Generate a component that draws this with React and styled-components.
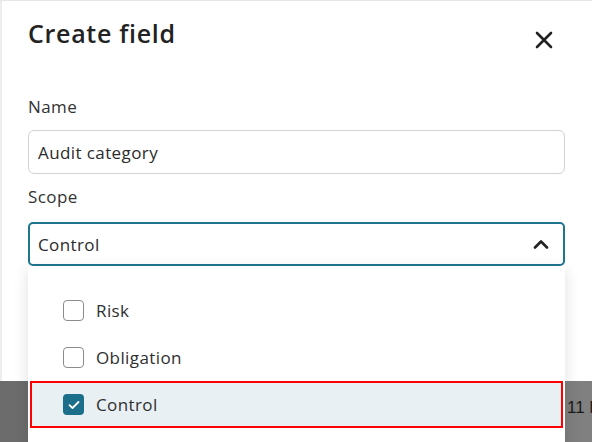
import React, { useState } from "react";
import styled, { createGlobalStyle } from "styled-components";

const GlobalStyle = createGlobalStyle`
  html, body {
    margin: 0;
    padding: 0;
  }
  body {
    font-family: "Open Sans", "Liberation Sans", sans-serif;
    color: #2b2b2b;
  }
`;

const Page = styled.div`
  position: relative;
  width: 592px;
  height: 442px;
  overflow: hidden;
  background: #757575;
  display: flex;
  flex-direction: column;
`;

const Modal = styled.div`
  background: #fff;
  border-top: 1px solid #e6e6e6;
  border-left: 2px solid #ededed;
  height: 381px;
  flex-shrink: 0;
  box-sizing: border-box;
  padding: 15px 27px 0 26px;
  display: flex;
  flex-direction: column;
`;

const Header = styled.div`
  display: flex;
  align-items: center;
  justify-content: space-between;
  height: 34px;
  margin-bottom: 45px;
`;

const Title = styled.h2`
  margin: 0;
  font-size: 25px;
  font-weight: 600;
  letter-spacing: 0.7px;
  color: #222;
`;

const CloseButton = styled.button`
  border: 0;
  background: none;
  padding: 0;
  margin: 14px 12px 0 0;
  display: flex;
  cursor: pointer;
`;

const Label = styled.div`
  font-size: 17px;
  letter-spacing: 0.4px;
  color: #333;
  line-height: 24px;
  margin-bottom: ${(p) => p.gap}px;
`;

const TextInput = styled.div`
  height: 44px;
  box-sizing: border-box;
  border: 1px solid #d3d3d3;
  border-radius: 6px;
  display: flex;
  align-items: center;
  padding: 0 9px;
  font-size: 17px;
  letter-spacing: 0.4px;
  color: #2b2b2b;
  margin-bottom: 11px;
`;

const SelectWrap = styled.div`
  position: relative;
`;

const SelectBox = styled.div`
  height: 44px;
  box-sizing: border-box;
  border: 2px solid #1f7590;
  border-radius: 5px;
  display: flex;
  align-items: center;
  justify-content: space-between;
  padding: 0 14px 0 8px;
  font-size: 17px;
  letter-spacing: 0.4px;
  color: #2b2b2b;
`;

const Menu = styled.div`
  position: absolute;
  top: 100%;
  left: 0;
  right: 0;
  height: 200px;
  background: #fff;
  box-shadow: 0 4px 14px rgba(0, 0, 0, 0.13);
  padding-top: 21px;
  box-sizing: border-box;
  z-index: 2;
`;

const Option = styled.div`
  height: 47px;
  box-sizing: border-box;
  margin: 0 2px;
  display: flex;
  align-items: center;
  gap: 12px;
  padding-left: 31px;
  font-size: 17px;
  letter-spacing: 0.4px;
  color: #2f2f2f;
  background: ${(p) => (p.selected ? "#e9f0f3" : "transparent")};
  border: 2px solid ${(p) => (p.selected ? "#ff0000" : "transparent")};
`;

const Check = styled.span`
  width: 21px;
  height: 21px;
  box-sizing: border-box;
  border-radius: 4px;
  border: ${(p) => (p.checked ? "none" : "1.5px solid #8c8c8c")};
  background: ${(p) => (p.checked ? "#1c6f8b" : "#fff")};
  display: flex;
  align-items: center;
  justify-content: center;
`;

const Backdrop = styled.div`
  flex: 1;
  display: flex;
  align-items: center;
  background: linear-gradient(90deg, #6c6c6c 0%, #747474 60%, #808080 100%);
  padding: 0 0 8px 567px;
`;

const BackdropText = styled.span`
  font-family: "Liberation Sans", sans-serif;
  font-size: 17px;
  color: #1a1a1a;
  white-space: nowrap;
`;

const options = ["Risk", "Obligation", "Control"];

export default function App() {
  const [selected] = useState("Control");

  return (
    <>
      <GlobalStyle />
      <Page>
        <Modal>
          <Header>
            <Title>Create field</Title>
            <CloseButton>
              <svg width="18" height="18" viewBox="0 0 18 18">
                <path d="M2 2 L16 16 M16 2 L2 16" stroke="#222" strokeWidth="2.6" strokeLinecap="round" />
              </svg>
            </CloseButton>
          </Header>
          <Label gap={11}>Name</Label>
          <TextInput>Audit category</TextInput>
          <Label gap={13}>Scope</Label>
          <SelectWrap>
            <SelectBox>
              <span>Control</span>
              <svg width="16" height="10" viewBox="0 0 16 10">
                <path d="M2 8.5 L8 2.5 L14 8.5" stroke="#222" strokeWidth="2.6" fill="none" strokeLinecap="round" strokeLinejoin="round" />
              </svg>
            </SelectBox>
            <Menu>
              {options.map((o) => (
                <Option key={o} selected={o === selected}>
                  <Check checked={o === selected}>
                    {o === selected && (
                      <svg width="12" height="10" viewBox="0 0 12 10">
                        <path d="M1.5 5.2 L4.5 8 L10.5 2" stroke="#fff" strokeWidth="1.8" fill="none" strokeLinecap="round" strokeLinejoin="round" />
                      </svg>
                    )}
                  </Check>
                  {o}
                </Option>
              ))}
            </Menu>
          </SelectWrap>
        </Modal>
        <Backdrop>
          <BackdropText>11 N</BackdropText>
        </Backdrop>
      </Page>
    </>
  );
}
